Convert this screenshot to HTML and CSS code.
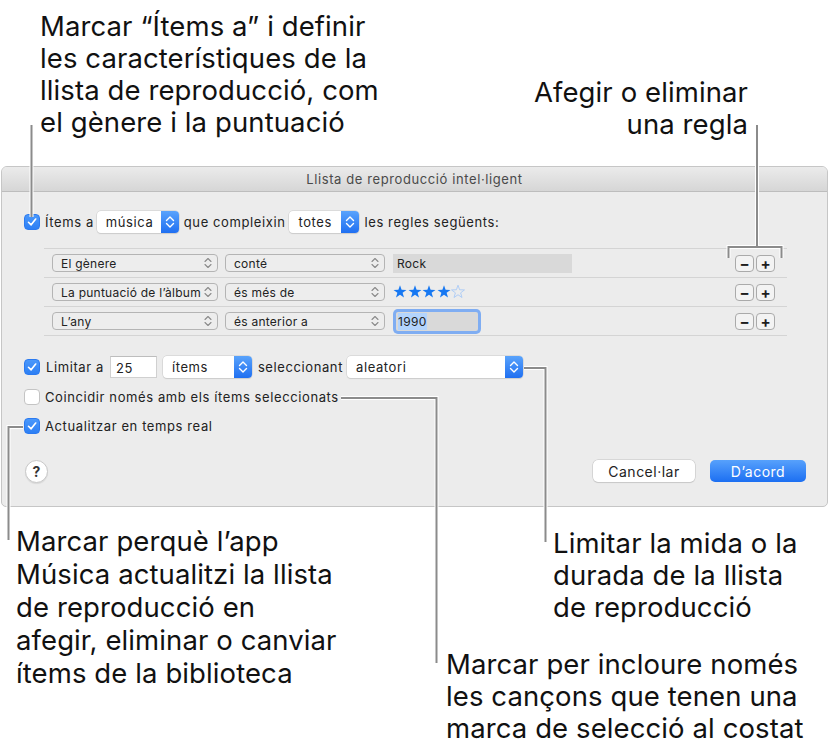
FILE: index.html
```html
<!DOCTYPE html>
<html lang="ca">
<head>
<meta charset="utf-8">
<title>Llista de reproducció intel·ligent</title>
<link rel="stylesheet" href="styles.css">
</head>
<body>
<div class="page">
  <div class="top">
    <p class="note note-tl">Marcar “Ítems a” i definir<br>les característiques de la<br>llista de reproducció, com<br>el gènere i la puntuació</p>
    <p class="note note-tr">Afegir o eliminar<br>una regla</p>
  </div>

  <div class="dialog">
    <div class="titlebar">Llista de reproducció intel·ligent</div>
    <div class="dbody">
      <div class="row row-match">
        <span class="cb on"><svg viewBox="0 0 16 16"><path d="M4 8.3 L7 11.2 L12.2 4.6"/></svg></span>
        <span class="lbl">Ítems a</span>
        <span class="pop w-musica"><span class="pop-t">música</span><span class="pop-a"><svg viewBox="0 0 18 22"><path d="M5.5 9.5 L9 6 L12.5 9.5"/><path d="M5.5 12.5 L9 16 L12.5 12.5"/></svg></span></span>
        <span class="lbl">que compleixin</span>
        <span class="pop w-totes"><span class="pop-t">totes</span><span class="pop-a"><svg viewBox="0 0 18 22"><path d="M5.5 9.5 L9 6 L12.5 9.5"/><path d="M5.5 12.5 L9 16 L12.5 12.5"/></svg></span></span>
        <span class="lbl">les regles següents:</span>
      </div>

      <div class="rules">
        <div class="rule">
          <span class="mpop w-field"><span class="mpop-t">El gènere</span><svg class="mpop-a" viewBox="0 0 10 16"><path d="M2 6.5 L5 3.5 L8 6.5"/><path d="M2 9.5 L5 12.5 L8 9.5"/></svg></span>
          <span class="mpop w-op"><span class="mpop-t">conté</span><svg class="mpop-a" viewBox="0 0 10 16"><path d="M2 6.5 L5 3.5 L8 6.5"/><path d="M2 9.5 L5 12.5 L8 9.5"/></svg></span>
          <span class="tfield">Rock</span>
          <span class="pm"><span class="pmb">−</span><span class="pmb">+</span></span>
        </div>
        <div class="rule">
          <span class="mpop w-field"><span class="mpop-t">La puntuació de l’àlbum</span><svg class="mpop-a" viewBox="0 0 10 16"><path d="M2 6.5 L5 3.5 L8 6.5"/><path d="M2 9.5 L5 12.5 L8 9.5"/></svg></span>
          <span class="mpop w-op"><span class="mpop-t">és més de</span><svg class="mpop-a" viewBox="0 0 10 16"><path d="M2 6.5 L5 3.5 L8 6.5"/><path d="M2 9.5 L5 12.5 L8 9.5"/></svg></span>
          <span class="stars">
            <svg class="star on" viewBox="0 0 14 14"><path d="M7 0.2 L8.62 4.78 L13.47 4.9 L9.62 7.85 L11 12.5 L7 9.75 L3 12.5 L4.38 7.85 L0.53 4.9 L5.38 4.78 Z"/></svg>
            <svg class="star on" viewBox="0 0 14 14"><path d="M7 0.2 L8.62 4.78 L13.47 4.9 L9.62 7.85 L11 12.5 L7 9.75 L3 12.5 L4.38 7.85 L0.53 4.9 L5.38 4.78 Z"/></svg>
            <svg class="star on" viewBox="0 0 14 14"><path d="M7 0.2 L8.62 4.78 L13.47 4.9 L9.62 7.85 L11 12.5 L7 9.75 L3 12.5 L4.38 7.85 L0.53 4.9 L5.38 4.78 Z"/></svg>
            <svg class="star on" viewBox="0 0 14 14"><path d="M7 0.2 L8.62 4.78 L13.47 4.9 L9.62 7.85 L11 12.5 L7 9.75 L3 12.5 L4.38 7.85 L0.53 4.9 L5.38 4.78 Z"/></svg>
            <svg class="star off" viewBox="0 0 14 14"><path d="M7 0.2 L8.62 4.78 L13.47 4.9 L9.62 7.85 L11 12.5 L7 9.75 L3 12.5 L4.38 7.85 L0.53 4.9 L5.38 4.78 Z"/></svg>
          </span>
          <span class="pm"><span class="pmb">−</span><span class="pmb">+</span></span>
        </div>
        <div class="rule">
          <span class="mpop w-field"><span class="mpop-t">L’any</span><svg class="mpop-a" viewBox="0 0 10 16"><path d="M2 6.5 L5 3.5 L8 6.5"/><path d="M2 9.5 L5 12.5 L8 9.5"/></svg></span>
          <span class="mpop w-op"><span class="mpop-t">és anterior a</span><svg class="mpop-a" viewBox="0 0 10 16"><path d="M2 6.5 L5 3.5 L8 6.5"/><path d="M2 9.5 L5 12.5 L8 9.5"/></svg></span>
          <span class="tfield focus"><span class="sel">1990</span></span>
          <span class="pm"><span class="pmb">−</span><span class="pmb">+</span></span>
        </div>
      </div>

      <div class="row row-limit">
        <span class="cb on"><svg viewBox="0 0 16 16"><path d="M4 8.3 L7 11.2 L12.2 4.6"/></svg></span>
        <span class="lbl">Limitar a</span>
        <span class="input">25</span>
        <span class="pop w-items"><span class="pop-t">ítems</span><span class="pop-a"><svg viewBox="0 0 18 22"><path d="M5.5 9.5 L9 6 L12.5 9.5"/><path d="M5.5 12.5 L9 16 L12.5 12.5"/></svg></span></span>
        <span class="lbl">seleccionant</span>
        <span class="pop w-aleat"><span class="pop-t">aleatori</span><span class="pop-a"><svg viewBox="0 0 18 22"><path d="M5.5 9.5 L9 6 L12.5 9.5"/><path d="M5.5 12.5 L9 16 L12.5 12.5"/></svg></span></span>
      </div>

      <div class="row row-opt row-coin">
        <span class="cb"></span>
        <span class="lbl">Coincidir només amb els ítems seleccionats</span>
      </div>

      <div class="row row-opt row-live">
        <span class="cb on"><svg viewBox="0 0 16 16"><path d="M4 8.3 L7 11.2 L12.2 4.6"/></svg></span>
        <span class="lbl">Actualitzar en temps real</span>
      </div>

      <div class="footer">
        <span class="help">?</span>
        <span class="btn btn-cancel">Cancel·lar</span>
        <span class="btn btn-ok">D’acord</span>
      </div>
    </div>
  </div>

  <div class="bottom">
    <p class="note note-bl">Marcar perquè l’app<br>Música actualitzi la llista<br>de reproducció en<br>afegir, eliminar o canviar<br>ítems de la biblioteca</p>
    <div class="bcol">
      <p class="note note-br1">Limitar la mida o la<br>durada de la llista<br>de reproducció</p>
      <p class="note note-br2">Marcar per incloure només<br>les cançons que tenen una<br>marca de selecció al costat</p>
    </div>
  </div>

  <svg class="leaders" viewBox="0 0 830 747" width="830" height="747">
    <g class="halo">
      <path d="M31.5 125 V217"/>
      <path d="M757 125 V247 M728.5 258 V247 H781.5 V258"/>
      <path d="M524 368 H545.5 V542"/>
      <path d="M341 398 H436.5 V663"/>
      <path d="M23 427 H8.5 V540"/>
    </g>
    <g class="line">
      <path d="M31.5 125 V217"/>
      <path d="M757 125 V247 M728.5 258 V247 H781.5 V258"/>
      <path d="M524 368 H545.5 V542"/>
      <path d="M341 398 H436.5 V663"/>
      <path d="M23 427 H8.5 V540"/>
    </g>
  </svg>
</div>
</body>
</html>
```

FILE: styles.css
```css
* { box-sizing: border-box; }

html, body {
  margin: 0;
  padding: 0;
  background: #ffffff;
}

.page {
  position: relative;
  width: 830px;
  height: 747px;
  overflow: hidden;
  font-family: "Inter", "Roboto", "Liberation Sans", sans-serif;
  font-feature-settings: "locl" 0;
  color: #1a1a1a;
}

/* ---------- callout notes ---------- */
.note {
  margin: 0;
  font-size: 27.5px;
  letter-spacing: 0.1px;
  line-height: 32px;
  color: #111111;
  white-space: nowrap;
}

.top {
  display: flex;
  justify-content: space-between;
  height: 166px;
}

.note-tl { margin: 10px 0 0 40px; }
.note-tr { margin: 76px 82px 0 0; text-align: right; }

.bottom {
  display: flex;
}

.note-bl { margin: 18px 0 0 16px; line-height: 33px; }

.bcol {
  display: flex;
  flex-direction: column;
  margin-left: auto;
  width: 384px;
}

.note-br1 { margin: 20px 0 0 107px; }
.note-br2 { margin: 25px 0 0 0; }

/* ---------- dialog ---------- */
.dialog {
  margin-left: 1px;
  width: 827px;
  height: 341px;
  border: 1px solid #c6c6c6;
  border-radius: 6px 6px 5px 5px;
  background: #ececec;
  font-size: 13px;
  letter-spacing: 0.6px;
  color: #222222;
  overflow: hidden;
}

.titlebar {
  height: 25px;
  line-height: 25px;
  text-align: center;
  font-size: 13px;
  color: #4a4a4a;
  background: linear-gradient(#ebebeb, #d6d6d6);
  border-bottom: 1px solid #bdbdbd;
}

.dbody {
  padding: 0 21px 0 22px;
}

.row {
  display: flex;
  align-items: center;
  white-space: nowrap;
}

.lbl { color: #222222; }

.row-match {
  margin-top: 19px;
  height: 22px;
  gap: 5px;
}

.row-limit {
  margin-top: 20px;
  height: 22px;
  gap: 6px;
}

.row-opt {
  height: 18px;
  gap: 5px;
}
.row-coin { margin-top: 10px; }
.row-live { margin-top: 11px; }

/* checkboxes */
.cb {
  flex: none;
  width: 16px;
  height: 16px;
  border-radius: 4px;
  background: #ffffff;
  border: 1px solid #c4c4c4;
  display: flex;
  align-items: center;
  justify-content: center;
}
.cb.on {
  background: linear-gradient(#4a98fb, #2d7ff4);
  border-color: #2b7af0;
}
.cb svg { width: 14px; height: 14px; }
.cb svg path {
  fill: none;
  stroke: #ffffff;
  stroke-width: 1.9;
  stroke-linecap: round;
  stroke-linejoin: round;
}

/* regular popups */
.pop {
  flex: none;
  display: flex;
  height: 22px;
  background: #ffffff;
  border-radius: 4px;
  box-shadow: 0 0 0 0.5px #c9c9c9, 0 1px 1px rgba(0,0,0,0.12);
  overflow: hidden;
}
.pop-t {
  flex: 1;
  padding-left: 9px;
  line-height: 22px;
  color: #222222;
}
.pop-a {
  width: 18px;
  background: linear-gradient(#59a3fc, #1f6ff1);
  display: flex;
}
.pop-a svg { width: 18px; height: 22px; }
.pop-a path {
  fill: none;
  stroke: #ffffff;
  stroke-width: 1.4;
  stroke-linecap: round;
  stroke-linejoin: round;
}
.w-musica { width: 82px; margin-left: -2px; }
.w-totes { width: 70px; margin-left: -1px; }
.w-items { width: 89px; }
.w-aleat { width: 176px; margin-left: -2px; }

.input {
  flex: none;
  width: 47px;
  height: 22px;
  line-height: 22px;
  padding-left: 5px;
  background: #ffffff;
  border: 1px solid #d0d0d0;
  border-top-color: #bdbdbd;
}

/* rules */
.rules {
  margin: 15px 19px 0 20px;
  border-top: 1px solid #d4d4d4;
}
.rule {
  display: flex;
  align-items: center;
  height: 29px;
  border-bottom: 1px solid #d4d4d4;
  padding: 0 12px 0 8px;
  white-space: nowrap;
}

.mpop {
  flex: none;
  display: flex;
  align-items: center;
  height: 18px;
  border: 1px solid #b4b4b4;
  border-radius: 4px;
  background: #ededed;
  font-size: 12px;
  letter-spacing: 0.25px;
  padding: 0 4px 0 8px;
}
.mpop-t { flex: 1; color: #222222; }
.mpop-a { width: 10px; height: 16px; }
.mpop-a path {
  fill: none;
  stroke: #8a8a8a;
  stroke-width: 1.1;
  stroke-linecap: round;
  stroke-linejoin: round;
}
.w-field { width: 166px; }
.w-op { width: 160px; margin-left: 7px; }

.tfield {
  flex: none;
  width: 179px;
  height: 19px;
  line-height: 19px;
  margin-left: 8px;
  padding-left: 4px;
  background: #d9d9d9;
  font-size: 12px;
  letter-spacing: 0.3px;
  color: #222222;
}
.tfield.focus {
  width: 82px;
  margin-left: 11px;
  box-shadow: 0 0 0 3px #7fadf2;
  border-radius: 2px;
  padding-left: 2px;
}
.sel { background: #b3d4fd; padding: 1px 0; }

.stars {
  flex: none;
  margin-left: 8px;
  width: 179px;
  display: flex;
  align-items: center;
  gap: 0.5px;
}
.star { width: 14px; height: 14px; flex: none; }
.star.on path { fill: #1778f2; }
.star.off path { fill: none; stroke: #a9c9f6; stroke-width: 0.9; stroke-linejoin: round; }

.pm {
  margin-left: auto;
  display: flex;
  gap: 2px;
}
.pmb {
  width: 19px;
  height: 17px;
  border: 1px solid #aaaaaa;
  border-radius: 4px;
  background: #f3f3f3;
  display: flex;
  align-items: center;
  justify-content: center;
  font-size: 15px;
  font-weight: 700;
  letter-spacing: 0;
  color: #1e1e1e;
  line-height: 1;
}

/* footer */
.footer {
  display: flex;
  align-items: center;
  margin-top: 25px;
  height: 22px;
}
.help {
  width: 23px;
  height: 23px;
  border-radius: 50%;
  background: #ffffff;
  border: 1px solid #c8c8c8;
  box-shadow: 0 1px 1px rgba(0,0,0,0.08);
  display: flex;
  align-items: center;
  justify-content: center;
  font-size: 14px;
  font-weight: 700;
  letter-spacing: 0;
  color: #333333;
  margin-left: 1px;
}
.btn {
  height: 22px;
  border-radius: 5px;
  display: flex;
  align-items: center;
  justify-content: center;
  font-size: 14px;
  letter-spacing: 0.5px;
}
.btn-cancel {
  margin-left: auto;
  width: 102px;
  background: #ffffff;
  box-shadow: 0 0 0 0.5px #c2c2c2, 0 1px 1px rgba(0,0,0,0.12);
  color: #222222;
}
.btn-ok {
  margin-left: 15px;
  width: 96px;
  background: linear-gradient(#57a1fc, #1c6ff2);
  color: #ffffff;
}

/* leader lines overlay */
.leaders {
  position: absolute;
  left: 0;
  top: 0;
  pointer-events: none;
}
.leaders path { fill: none; }
.halo path { stroke: #ffffff; stroke-width: 4; }
.line path { stroke: #8b8b8b; stroke-width: 2; }
```
